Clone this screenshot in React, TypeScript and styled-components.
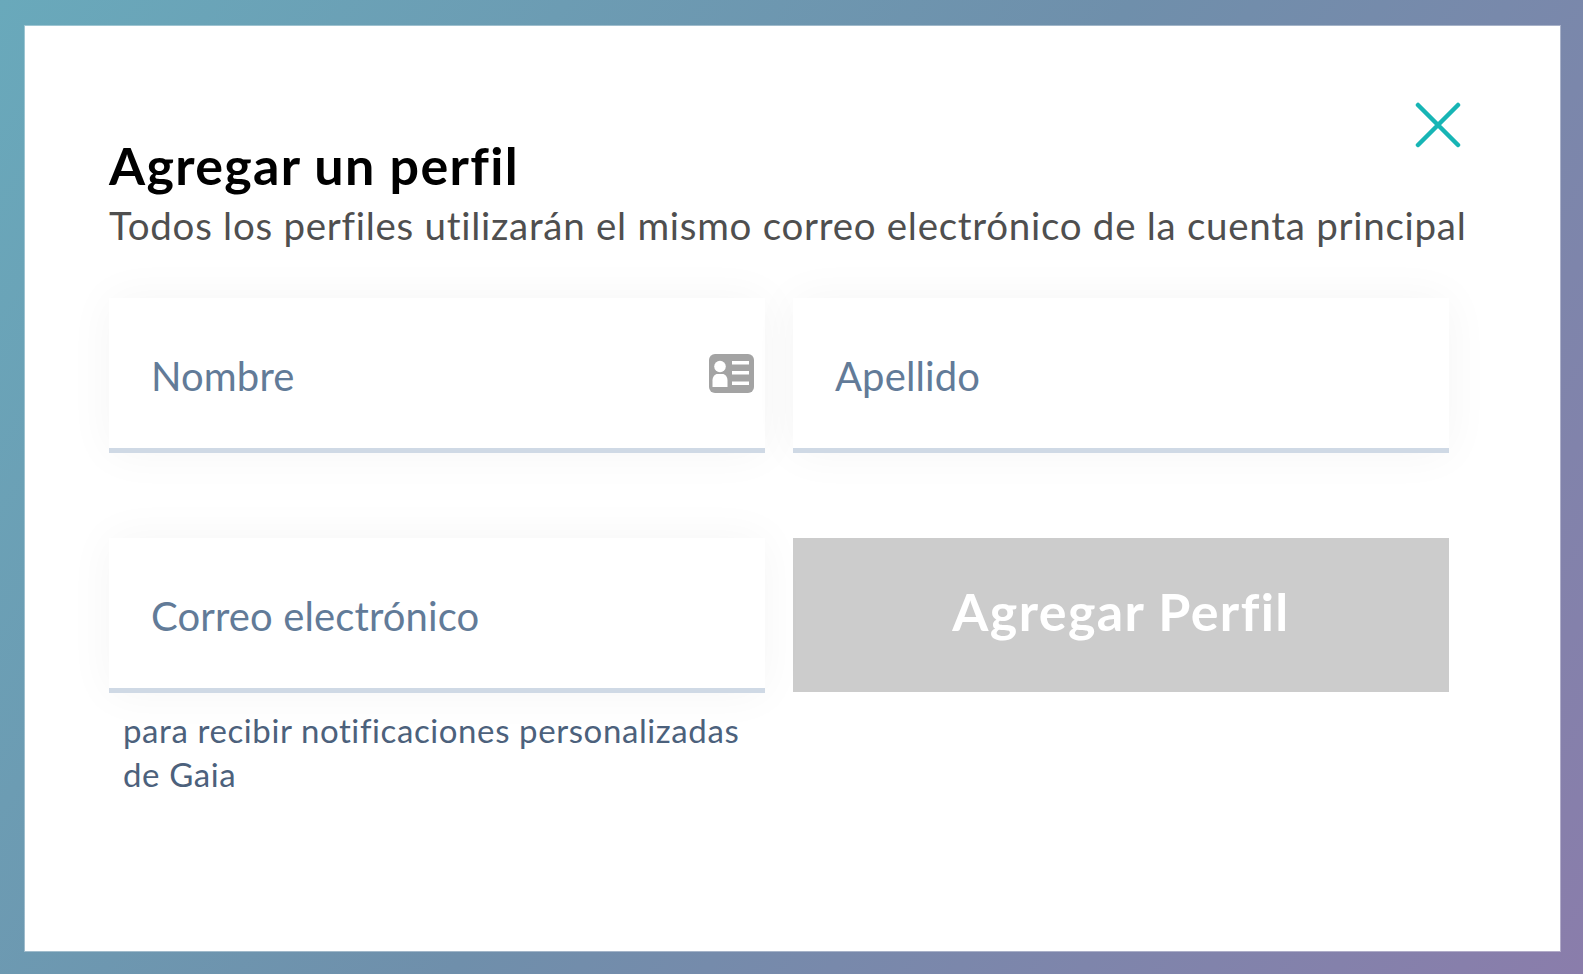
import React from "react";
import styled, { createGlobalStyle } from "styled-components";

const GlobalStyle = createGlobalStyle`
  html, body {
    margin: 0;
    padding: 0;
  }
  body {
    font-family: Lato, "Noto Sans", sans-serif;
    font-variant-ligatures: none;
  }
`;

const Page = styled.div`
  box-sizing: border-box;
  width: 1583px;
  height: 974px;
  padding: 26px 23px 23px 25px;
  background: linear-gradient(125deg, #69a9bb 0%, #6f8fab 50%, #8a7dab 100%);
  overflow: hidden;
`;

const Modal = styled.section`
  position: relative;
  box-sizing: border-box;
  height: 925px;
  padding: 111px 84px 0;
  background: #fff;
  box-shadow: 0 0 0 1px rgba(255, 255, 255, 0.35);
`;

const CloseButton = styled.button`
  position: absolute;
  top: 76px;
  right: 99px;
  width: 46px;
  height: 46px;
  padding: 0;
  border: 0;
  background: none;
  color: #17b5b5;
  svg {
    display: block;
  }
`;

const Title = styled.h1`
  margin: 0;
  font-size: 52px;
  line-height: 56px;
  font-weight: 700;
  letter-spacing: 1.32px;
  color: #000;
`;

const Subtitle = styled.p`
  margin: 7px 0 0;
  font-size: 38.5px;
  line-height: 50px;
  font-weight: 400;
  letter-spacing: 0.72px;
  color: #4f4f4f;
  white-space: nowrap;
`;

const FormGrid = styled.div`
  display: grid;
  grid-template-columns: 656px 656px;
  column-gap: 28px;
  row-gap: 85px;
  align-items: start;
  margin-top: 48px;
`;

const FieldBox = styled.div`
  position: relative;
  box-sizing: border-box;
  display: flex;
  align-items: center;
  height: 155px;
  padding: 5px 42px 0;
  background: #fff;
  border-bottom: 5px solid #cfd9e5;
  box-shadow: 0 0 44px rgba(0, 0, 0, 0.045);
`;

const FieldLabel = styled.span`
  font-size: 40px;
  letter-spacing: 0.12px;
  color: #627b98;
`;

const CardIcon = styled.svg`
  position: absolute;
  top: 56px;
  right: 11px;
`;

const Hint = styled.p`
  margin: 15px 0 0;
  padding: 0 14px;
  font-size: 33px;
  line-height: 44px;
  letter-spacing: 0.6px;
  color: #4c617c;
`;

const SubmitButton = styled.button`
  display: block;
  width: 100%;
  height: 154px;
  padding: 0 0 8px;
  border: 0;
  background: #cccccc;
  color: #fff;
  font-family: inherit;
  font-size: 52px;
  font-weight: 700;
  letter-spacing: 1.4px;
`;

function IdCardIcon() {
  return (
    <CardIcon width="45" height="39" viewBox="0 0 45 39" aria-hidden="true">
      <rect width="45" height="39" rx="6" fill="#a3a3a3" />
      <circle cx="11" cy="12.500" r="5.800" fill="#fff" />
      <path d="M3.500 33v-6.500c0-4 2.500-6.500 5-6.500h5c2.500 0 5 2.500 5 6.500V33z" fill="#fff" />
      <path d="M23 7h17v3.500H23zM23 17h17v3.500H23zM23 27.500h17V31H23z" fill="#fff" />
    </CardIcon>
  );
}

export default function App() {
  return (
    <>
      <GlobalStyle />
      <Page>
        <Modal>
          <CloseButton aria-label="Cerrar">
            <svg width="46" height="46" viewBox="0 0 46 46" fill="none" stroke="currentColor" strokeWidth="4.500" strokeLinecap="round">
              <path d="M3 3l40 40M43 3L3 43" />
            </svg>
          </CloseButton>
          <Title>Agregar un perfil</Title>
          <Subtitle>Todos los perfiles utilizarán el mismo correo electrónico de la cuenta principal</Subtitle>
          <FormGrid>
            <FieldBox>
              <FieldLabel>Nombre</FieldLabel>
              <IdCardIcon />
            </FieldBox>
            <FieldBox>
              <FieldLabel>Apellido</FieldLabel>
            </FieldBox>
            <div>
              <FieldBox>
                <FieldLabel>Correo electrónico</FieldLabel>
              </FieldBox>
              <Hint>para recibir notificaciones personalizadas de Gaia</Hint>
            </div>
            <SubmitButton>Agregar Perfil</SubmitButton>
          </FormGrid>
        </Modal>
      </Page>
    </>
  );
}
